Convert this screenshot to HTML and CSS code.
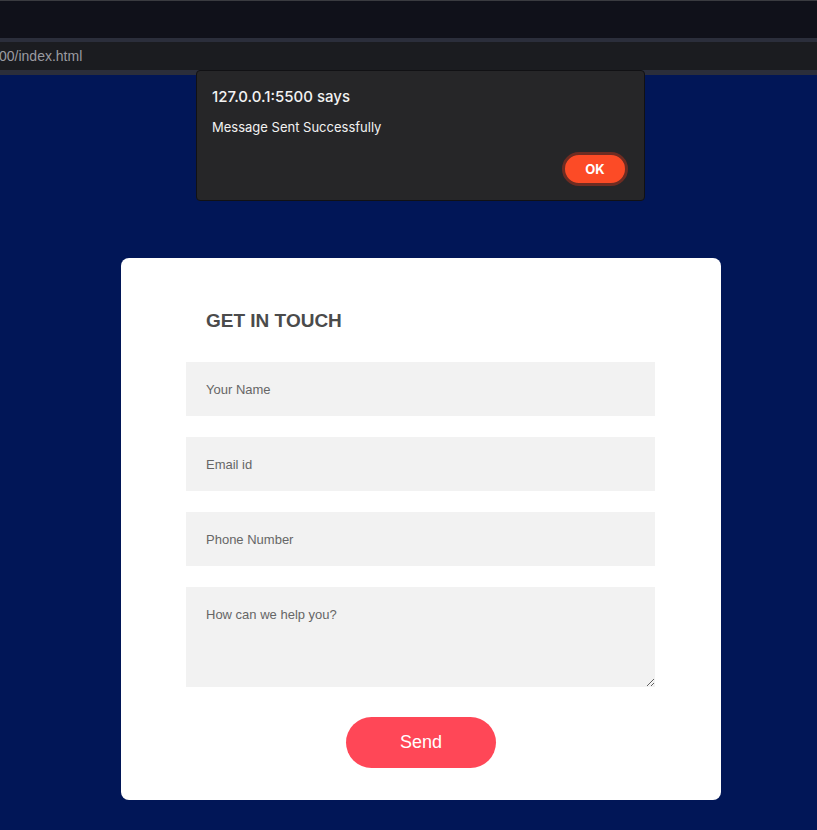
FILE: index.html
```html
<!DOCTYPE html>
<html lang="en">
<head>
<meta charset="utf-8">
<title>Contact</title>
<link rel="stylesheet" href="styles.css">
</head>
<body>
<header class="chrome">
  <div class="tabs"></div>
  <div class="sep"></div>
  <div class="address"><span class="url">00/index.html</span></div>
  <div class="sep sep-bottom"></div>
</header>

<div class="dialog" role="alertdialog">
  <div class="dialog-title">127.0.0.1:5500 says</div>
  <div class="dialog-msg">Message Sent Successfully</div>
  <div class="dialog-actions"><button class="ok">OK</button></div>
</div>

<main class="page">
  <form class="card">
    <h2 class="title">GET IN TOUCH</h2>
    <input class="field" type="text" placeholder="Your Name">
    <input class="field" type="text" placeholder="Email id">
    <input class="field" type="text" placeholder="Phone Number">
    <textarea class="field area" placeholder="How can we help you?"></textarea>
    <button class="send" type="button">Send</button>
  </form>
</main>
</body>
</html>
```
FILE: styles.css
```css
* { box-sizing: border-box; }
html, body { margin: 0; padding: 0; }
body {
  background: #011657;
  font-family: "Liberation Sans", Arial, sans-serif;
  width: 817px;
  height: 830px;
  overflow: hidden;
  position: relative;
}
.chrome { display: flex; flex-direction: column; }
.tabs {
  height: 38px;
  background: #10111a;
  border-top: 1px solid #3a3b40;
}
.sep { height: 4px; background: #2b2e3b; }
.sep-bottom { height: 5px; }
.address {
  height: 28px;
  background: #1b1c20;
  display: flex;
  align-items: center;
}
.url {
  color: #9a9ba0;
  font-family: "Liberation Sans", Arial, sans-serif;
  font-size: 14px;
  margin-left: -1px;
}

.dialog {
  position: absolute;
  left: 196px;
  top: 70px;
  width: 449px;
  height: 131px;
  background: #262628;
  border: 1px solid #111114;
  border-radius: 4px;
  font-family: "Inter", "Liberation Sans", sans-serif;
  color: #f2f2f2;
  padding: 17px 16px 0 15px;
}
.dialog-title { font-size: 15px; line-height: 17px; font-weight: 500; }
.dialog-msg { font-size: 13px; line-height: 16px; margin-top: 14px; }
.dialog-actions { display: flex; justify-content: flex-end; margin-top: 17px; }
.ok {
  width: 66px;
  height: 34px;
  border-radius: 17px;
  background: #fc4b26;
  border: 3px solid #6e2c22;
  color: #fff;
  font-family: "Inter", "Liberation Sans", sans-serif;
  font-weight: 700;
  font-size: 13px;
  padding: 0;
}

.page { padding: 183px 0 0 121px; }
.card {
  width: 600px;
  height: 542px;
  background: #fff;
  border-radius: 8px;
  padding: 51px 66px 0 65px;
  display: flex;
  flex-direction: column;
}
.title {
  margin: 0 0 29px 20px;
  font-size: 19px;
  line-height: 24px;
  font-weight: 700;
  color: #4b4b4b;
}
.field {
  display: block;
  width: 469px;
  height: 54px;
  border: none;
  background: #f2f2f2;
  margin: 0 0 21px 0;
  padding: 0 20px;
  font-family: "Liberation Sans", Arial, sans-serif;
  font-size: 13px;
  color: #555;
  outline: none;
}
.field::placeholder { color: #666; }
.area {
  height: 100px;
  padding: 20px 20px;
  resize: vertical;
  margin-bottom: 30px;
  line-height: 15px;
}
.send {
  align-self: center;
  margin-left: 1px;
  width: 150px;
  height: 51px;
  border: none;
  border-radius: 26px;
  background: #ff4757;
  color: #fff;
  font-family: "Liberation Sans", Arial, sans-serif;
  font-size: 18px;
}
```
